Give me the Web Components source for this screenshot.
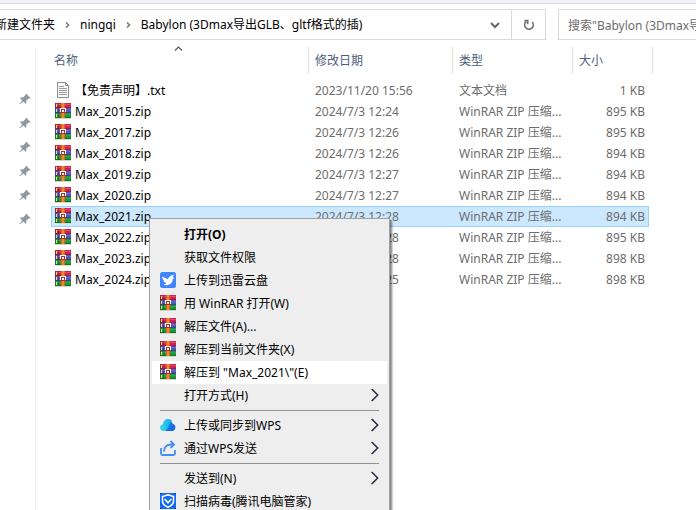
<!DOCTYPE html>
<html lang="zh-CN">
<head>
<meta charset="utf-8">
<title>Babylon</title>
<style>
html, body { margin: 0; height: 100%; }
body { overflow: hidden; background: #fff; color: #000; font: 12px/20px "Noto Sans", "Noto Sans CJK SC", sans-serif; }
</style>
</head>
<body>
<explorer-window>
  <address-bar slot="bar"></address-bar>
  <quick-pins slot="side"></quick-pins>
  <file-list slot="files"></file-list>
  <context-menu slot="menu">
    <menu-item strong>打开(O)</menu-item>
    <menu-item>获取文件权限</menu-item>
    <menu-item icon="bird">上传到迅雷云盘</menu-item>
    <menu-item icon="zip">用 WinRAR 打开(W)</menu-item>
    <menu-item icon="zip">解压文件(A)...</menu-item>
    <menu-item icon="zip">解压到当前文件夹(X)</menu-item>
    <menu-item icon="zip" active>解压到 "Max_2021\"(E)</menu-item>
    <menu-item more>打开方式(H)</menu-item>
    <menu-rule></menu-rule>
    <menu-item icon="cloud" more>上传或同步到WPS</menu-item>
    <menu-item icon="share" more>通过WPS发送</menu-item>
    <menu-rule></menu-rule>
    <menu-item more>发送到(N)</menu-item>
    <menu-item icon="shield">扫描病毒(腾讯电脑管家)</menu-item>
  </context-menu>
</explorer-window>
<script>
const glyphs = {
  zip: `<path fill="#d7d7d2" d="M0 0h16v16H0z"/>
    <path fill="#cf2450" d="M0 0h16v5H0z"/><path fill="#e04a6c" d="M2 1h14v1H2z"/><path fill="#9c1a40" d="M0 4h16v1H0z"/>
    <path fill="#5554bb" d="M0 5h16v5H0z"/><path fill="#6c6bca" d="M2 6h14v1H2z"/><path fill="#3f3d91" d="M0 9h16v1H0z"/>
    <path fill="#1c9638" d="M0 10h16v5H0z"/><path fill="#2aa947" d="M2 11h14v1H2z"/><path fill="#0f7529" d="M0 14h16v1H0z"/>
    <path fill="#252238" d="M0 0h1v15H0zM3 0h1v15H3z" opacity=".35"/>
    <path fill="#ffdf3c" d="M1 1h1v3H1zM1 6h1v3H1zM1 11h1v3H1z"/>
    <path fill="#dd6418" d="M6 0h4v15H6z"/><path fill="#f0852f" d="M7 0h2v15H7z"/>
    <path fill="#b02c24" d="M5 5h6v5H5z"/><path fill="#fff" d="M5 5h1v4H5zM10 5h1v4h-1zM6 5h4v1H6zM7 7h2v2H7z"/>`,
  txt: `<path fill="#fafafa" stroke="#8d8d8d" d="M2.500 .5h8l3 3v12h-11z"/><path fill="none" stroke="#8d8d8d" d="M10.500 .5v3h3"/>
    <path stroke="#9a9a9a" d="M4 4.500h5M4 6.500h8M4 8.500h8M4 10.500h8M4 12.500h8"/>`,
  bird: `<rect width="16" height="16" rx="2.500" fill="#3f85fb"/><path fill="#fff" d="M2 4.500 7.800 7.200C9 4.800 10.800 3 14 2.700L12.800 5l1.500 1.200-1.600.8c.1 3.100-1.800 5.500-5.200 6.200-1.800.4-3.100 0-4-.7 1.200-.1 2.200-.6 2.800-1.400C4.500 10.500 3.500 9.700 3.300 8.500l1 .1C2.900 7.500 2.100 6 2 4.500z"/>`,
  cloud: `<defs><linearGradient id="g" x2="1"><stop stop-color="#35dce6"/><stop offset="1" stop-color="#15a5ef"/></linearGradient><linearGradient id="b" x2="1" y2="1"><stop stop-color="#1ca4f3"/><stop offset="1" stop-color="#1159dc"/></linearGradient></defs>
    <path fill="url(#b)" d="M3 8a5 5 0 0 1 9.700-1.300A3.800 3.800 0 0 1 12.500 14H6z"/><path fill="url(#g)" d="M3.700 14C1.400 14 0 12.500 0 10.600 0 8.800 1.300 7.500 3 7.200 3.200 4.200 5 2 8 2c1.800 0 3.300.8 4.200 2.300C8.500 4.800 9.700 8.200 7.300 11.800 6.300 13.300 5 14 3.700 14z"/>`,
  share: `<path fill="none" stroke="#438cf3" stroke-width="1.800" d="M1 8v5.500q0 1.500 1.500 1.500h11q1.500 0 1.500-1.500V10M4 11.500C4 7 6.500 4.500 11 4.500h3M10.500 1 14 4.500 10.500 8"/>`,
  shield: `<path fill="#146cf2" d="M0 0h16v16H0z"/><path fill="#10254d" d="M0 0h1v1H0zM15 0h1v1h-1zM0 15h1v1H0zM15 15h1v1h-1z"/><path fill="none" stroke="#fff" stroke-width="1.500" d="M8 1.800 13.500 3.500V8c0 3-2.500 5-5.500 6.300C5 13 2.500 11 2.500 8V3.500z"/><path fill="none" stroke="#fff" stroke-width="1.700" d="M4.700 6 8 9.700 11.300 6"/>`,
  pin: `<path fill="#8f9aa5" d="M9.500 3 13.500 7 12.300 7.700 11.500 7.500 9.300 9.700C9.500 11 9.200 12 8.500 12.700L6.300 10.500 3 13.200 2.500 12.700 5.200 9.400 3 7.200C3.700 6.500 4.700 6.200 6 6.400L8.300 4.200 8.200 3.400z"/>`,
  up: `<path fill="none" stroke="#555" stroke-width="1.200" d="M4 10.500 7.500 7 11 10.500"/>`,
  next: `<path fill="none" stroke="#767676" stroke-width="1.500" d="M6 5.500 8.500 8 6 10.500"/>`,
  down: `<path fill="none" stroke="#666" stroke-width="2" d="M4 6 8 10 12 6"/>`,
  reload: `<path fill="none" stroke="#707070" stroke-width="1.700" d="M11.200 5A4.300 4.300 0 1 1 5 4.700M3.500 3.700h3.200v3.500"/>`,
  more: `<g fill="none"><path stroke="#e0a060" d="M7 2 13 8 7 14"/><path stroke="#6aa8ee" d="M8.400 2 14.400 8 8.400 14"/><path stroke="#26203c" stroke-width="1.100" d="M7.700 2 13.700 8 7.700 14"/></g>`
};
const define = (name, render) => customElements.define(name, class extends HTMLElement {
  connectedCallback() {
    if (this.shadowRoot) return;
    this.attachShadow({ mode: "open" }).innerHTML = render(this);
  }
});
define("ui-icon", el => `<style>:host{display:block;width:16px;height:16px;flex:none}svg{display:block}</style>
  <svg width="16" height="16" viewBox="0 0 16 16" aria-hidden="true">${glyphs[el.getAttribute("name")] || ""}</svg>`);

define("explorer-window", () => `<style>
  :host{display:flex;flex-direction:column;height:100%;position:relative;overflow:hidden}
  .main{display:flex;flex:1;min-height:0}
  ::slotted([slot=files]){flex:1;min-width:0}
  ::slotted([slot=menu]){position:absolute;left:149px;top:218px}
  </style><slot name="bar"></slot><div class="main"><slot name="side"></slot><slot name="files"></slot></div><slot name="menu"></slot>`);

define("address-bar", () => `<style>
  :host{display:flex;gap:12px;padding-top:5px;border-top:3px solid #f3f4f8;box-shadow:inset 0 1px #d9dade;overflow:hidden}
  *{box-sizing:border-box}
  .path{flex:1;min-width:0;display:flex;height:31px;margin-top:1px;border:1px solid #d9d9d9;border-left:0}
  nav{flex:1;min-width:0;display:flex;align-items:center;overflow:hidden;white-space:nowrap;margin-left:-5px}
  a{color:inherit;text-decoration:none}
  nav ui-icon{margin:0 4px 0 5px}
  button{border:0;background:none;padding:0;width:33px;display:flex;align-items:center;justify-content:center}
  .reload{border-left:1px solid #d9d9d9;width:34px}
  input{width:138px;height:31px;margin-top:1px;border:1px solid #d9d9d9;border-right:0;border-radius:0;padding:0 0 0 9px;font:inherit;color:#6d6d6d;outline:0;background:#fff}
  </style>
  <div class="path"><nav aria-label="路径"><a href="#">新建文件夹</a><ui-icon name="next"></ui-icon><a href="#">ningqi</a><ui-icon name="next"></ui-icon><a href="#">Babylon (3Dmax导出GLB、gltf格式的插)</a></nav>
  <button aria-label="历史"><ui-icon name="down"></ui-icon></button><button class="reload" aria-label="刷新"><ui-icon name="reload"></ui-icon></button></div>
  <input type="text" aria-label="搜索" value='搜索"Babylon (3Dmax导出'>`);

define("quick-pins", () => `<style>
  :host{display:block;box-sizing:border-box;width:36px;margin-top:7px;padding:44px 0 0 17px;border-right:1px solid #f0f0f0}
  ui-icon{margin-bottom:8px}</style>` + `<ui-icon name="pin"></ui-icon>`.repeat(6));

const files = [
  ["【免责声明】.txt", "2023/11/20 15:56", "文本文档", "1 KB"],
  ["Max_2015.zip", "2024/7/3 12:24", "WinRAR ZIP 压缩...", "895 KB"],
  ["Max_2017.zip", "2024/7/3 12:26", "WinRAR ZIP 压缩...", "895 KB"],
  ["Max_2018.zip", "2024/7/3 12:26", "WinRAR ZIP 压缩...", "894 KB"],
  ["Max_2019.zip", "2024/7/3 12:27", "WinRAR ZIP 压缩...", "894 KB"],
  ["Max_2020.zip", "2024/7/3 12:27", "WinRAR ZIP 压缩...", "894 KB"],
  ["Max_2021.zip", "2024/7/3 12:28", "WinRAR ZIP 压缩...", "894 KB"],
  ["Max_2022.zip", "2024/7/3 12:28", "WinRAR ZIP 压缩...", "895 KB"],
  ["Max_2023.zip", "2024/7/3 12:28", "WinRAR ZIP 压缩...", "898 KB"],
  ["Max_2024.zip", "2024/7/3 12:25", "WinRAR ZIP 压缩...", "898 KB"]
];
define("file-list", () => `<style>
  :host{display:block;padding:7px 43px 0 15px}
  *{box-sizing:border-box}
  table,thead,tbody{display:block}
  tr{display:grid;grid-template-columns:minmax(160px,1fr) 144px 120px 80px}
  thead{margin-bottom:6px}
  th{position:relative;height:27px;padding:0 0 0 6px;font-weight:400;text-align:left;line-height:27px;color:#4c607a;border-right:1px solid #e2e2e2}
  th:first-child{padding-left:3px}
  th ui-icon{position:absolute;left:calc(50% - 9px);top:-7px}
  tbody tr{margin-right:4px;grid-template-columns:minmax(160px,1fr) 144px 120px 76px}
  td{height:21px;line-height:21px;padding:0 0 0 6px;color:#6d6d6d;white-space:nowrap;overflow:hidden}
  td:first-child{display:flex;align-items:center;gap:4px;padding-left:4px;color:#000}
  td ui-icon{margin-bottom:1px}
  td:last-child{text-align:right;padding:0 4px 0 0}
  .on{background:#cce8ff;box-shadow:inset 0 0 0 1px #99d1ff}
  </style><table><thead><tr><th>名称<ui-icon name="up"></ui-icon></th><th>修改日期</th><th>类型</th><th>大小</th></tr></thead><tbody>
  ${files.map(([n, d, t, s]) => `<tr${n === "Max_2021.zip" ? ' class="on" aria-selected="true"' : ""}><td><ui-icon name="${n.endsWith("txt") ? "txt" : "zip"}"></ui-icon><span>${n}</span></td><td>${d}</td><td>${t}</td><td>${s}</td></tr>`).join("")}</tbody></table>`);

define("context-menu", el => {
  el.setAttribute("role", "menu");
  return `<style>:host{display:block;box-sizing:border-box;width:241px;padding:4px 2px;background:#eee;border:1px solid #a0a0a0;box-shadow:2px 3px 2px rgba(0,0,0,.5)}</style><slot></slot>`;
});
define("menu-item", el => `<style>:host{display:block}
  button{width:100%;height:23px;display:flex;align-items:center;gap:8px;padding:0 7px 0 8px;border:0;background:none;color:#000;font:inherit;line-height:23px;text-align:left;white-space:nowrap}
  :host([active]) button{background:#fff}
  :host([strong]) button{font-weight:700}
  span{flex:1}
  ui-icon{margin-bottom:1px}
  </style><button role="menuitem"><ui-icon name="${el.getAttribute("icon") || ""}"></ui-icon><span><slot></slot></span>${el.hasAttribute("more") ? '<ui-icon name="more"></ui-icon>' : ""}</button>`);
define("menu-rule", () => `<style>:host{display:block;padding:3px 8px}hr{margin:0;border:0;height:1px;background:#919191}</style><hr>`);
</script>
</body>
</html>
